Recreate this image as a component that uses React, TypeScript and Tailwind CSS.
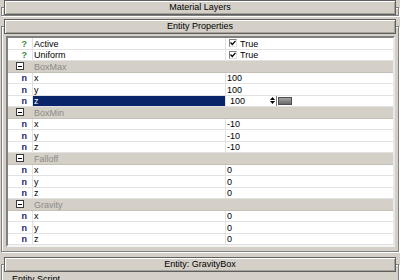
import React from "react";

type Row =
  | { kind: "bool"; name: string; value: string }
  | { kind: "group"; name: string }
  | { kind: "num"; name: string; value: string; selected?: boolean };

const rows: Row[] = [
  { kind: "bool", name: "Active", value: "True" },
  { kind: "bool", name: "Uniform", value: "True" },
  { kind: "group", name: "BoxMax" },
  { kind: "num", name: "x", value: "100" },
  { kind: "num", name: "y", value: "100" },
  { kind: "num", name: "z", value: "100", selected: true },
  { kind: "group", name: "BoxMin" },
  { kind: "num", name: "x", value: "-10" },
  { kind: "num", name: "y", value: "-10" },
  { kind: "num", name: "z", value: "-10" },
  { kind: "group", name: "Falloff" },
  { kind: "num", name: "x", value: "0" },
  { kind: "num", name: "y", value: "0" },
  { kind: "num", name: "z", value: "0" },
  { kind: "group", name: "Gravity" },
  { kind: "num", name: "x", value: "0" },
  { kind: "num", name: "y", value: "0" },
  { kind: "num", name: "z", value: "0" },
];

const Rollup = ({
  title,
  className = "",
  children,
}: {
  title: string;
  className?: string;
  children?: React.ReactNode;
}) => (
  <div className={`relative ${className}`}>
    {/* etched frame behind the header */}
    <div className="absolute left-[1px] right-[1px] top-[7px] bottom-[1px] border border-[#808080] shadow-[1px_1px_0_#ffffff,inset_1px_1px_0_#ffffff]" />
    <div className="relative mx-[4px] h-[15px] flex items-center justify-center bg-[#d4d0c8] border border-[#5f5f5f] shadow-[inset_1px_1px_0_#ffffff,inset_-1px_-1px_0_#a6a39b]">
      {title}
    </div>
    {children}
  </div>
);

const CheckBox = () => (
  <span className="w-[8px] h-[8px] border border-t-[#808080] border-l-[#808080] border-b-[#e0e0e0] border-r-[#e0e0e0] bg-white flex items-center justify-center">
    <svg width="6" height="6" viewBox="0 0 6 6">
      <path d="M0.5 2.5 L2.3 4.5 L5.5 0.8" fill="none" stroke="#000" strokeWidth="1.2" />
    </svg>
  </span>
);

const MinusBox = () => (
  <span className="w-[8px] h-[8px] border border-[#3a3a3a] bg-white flex items-center justify-center">
    <span className="w-[4px] h-[1px] bg-black" />
  </span>
);

const PropRow = ({ row }: { row: Row }) => {
  if (row.kind === "group") {
    return (
      <div className="h-[11.5px] flex items-center bg-[#d4d0c8] border-b border-[#c4c0b8]">
        <div className="w-[25px] pl-[8px] flex items-center">
          <MinusBox />
        </div>
        <span className="pl-[1px] pt-[2px] text-[#8c8a86]">{row.name}</span>
      </div>
    );
  }
  const selected = row.kind === "num" && row.selected;
  return (
    <div className="h-[11.5px] flex items-stretch bg-white border-b border-[#e2e2e2]">
      <div className="w-[25px] border-r border-[#e2e2e2] flex items-center justify-end pr-[5px] pt-[2px]">
        {row.kind === "bool" ? (
          <span className="font-bold text-[#3b8a3b]">?</span>
        ) : (
          <span className="font-bold text-[#1c1c6a]">n</span>
        )}
      </div>
      <div
        className={`w-[193px] border-r border-[#e2e2e2] flex items-center pl-[1px] pt-[2px] ${
          selected ? "bg-[#0a246a] text-white" : ""
        }`}
      >
        {row.name}
      </div>
      <div className="flex-1 flex items-center">
        {row.kind === "bool" ? (
          <>
            <span className="ml-[3px]">
              <CheckBox />
            </span>
            <span className="ml-[3px] pt-[2px]">{row.value}</span>
          </>
        ) : selected ? (
          <>
            <span className="ml-[4px] w-[39px] pt-[2px]">{row.value}</span>
            <span className="w-[8px] h-[10px] flex flex-col items-center justify-center gap-[1px] border-r border-[#808080]">
              <svg width="5" height="3" viewBox="0 0 5 3">
                <path d="M0 3 L2.5 0 L5 3 Z" fill="#000" />
              </svg>
              <svg width="5" height="3" viewBox="0 0 5 3">
                <path d="M0 0 L2.5 3 L5 0 Z" fill="#000" />
              </svg>
            </span>
            <span className="ml-[1px] w-[14px] h-[8px] bg-gradient-to-b from-[#a4a4a4] to-[#6a6a6a] border border-[#4e4e4e]" />
          </>
        ) : (
          <span className="pl-[1px] pt-[2px]">{row.value}</span>
        )}
      </div>
    </div>
  );
};

export default function App() {
  return (
    <div className="w-[400px] h-[280px] overflow-hidden bg-[#d4d0c8] text-black text-[9px] leading-none font-['Liberation_Sans',Arial,sans-serif]">
      <Rollup title="Material Layers" className="pb-[2px]" />
      <Rollup title="Entity Properties" className="mt-[2px] pb-[6px]">
        <div className="mt-[2px] ml-[6px] mr-[5px] border-2 border-t-[#808080] border-l-[#808080] border-b-[#f4f4f4] border-r-[#e8e8e8] shadow-[inset_1px_1px_0_#404040] bg-white">
          {rows.map((r, i) => (
            <PropRow key={i} row={r} />
          ))}
        </div>
      </Rollup>
      <Rollup title="Entity: GravityBox" className="mt-[4px]">
        <div className="pl-[12px] pt-[3px] pb-[6px]">Entity Script</div>
      </Rollup>
    </div>
  );
}
